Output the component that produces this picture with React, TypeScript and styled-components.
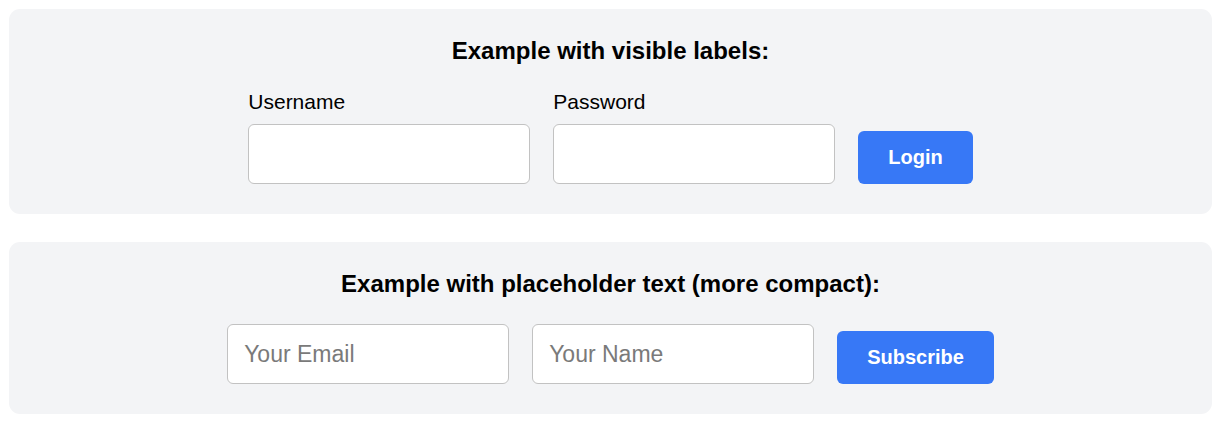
import React from 'react';
import styled, { createGlobalStyle } from 'styled-components';

const GlobalStyle = createGlobalStyle`
  * {
    box-sizing: border-box;
  }
  body {
    margin: 0;
    background: #ffffff;
    font-family: 'Liberation Sans', Arial, Helvetica, sans-serif;
    color: #000000;
  }
`;

const App = () => {
  return (
    <>
      <GlobalStyle />
      <Page>
        <Panel>
          <Title>Example with visible labels:</Title>
          <Form onSubmit={(e) => e.preventDefault()}>
            <Field>
              <Label htmlFor="username">Username</Label>
              <Input id="username" type="text" />
            </Field>
            <Field>
              <Label htmlFor="password">Password</Label>
              <Input id="password" type="password" />
            </Field>
            <Button type="submit">Login</Button>
          </Form>
        </Panel>
        <Panel>
          <Title $compact>Example with placeholder text (more compact):</Title>
          <Form onSubmit={(e) => e.preventDefault()}>
            <Input type="email" placeholder="Your Email" aria-label="Your Email" />
            <Input type="text" placeholder="Your Name" aria-label="Your Name" />
            <Button type="submit">Subscribe</Button>
          </Form>
        </Panel>
      </Page>
    </>
  );
};

export default App;

const Page = styled.div`
  display: flex;
  flex-direction: column;
  gap: 28px;
  padding: 9px;
`;

const Panel = styled.section`
  background: #f3f4f6;
  border-radius: 11px;
  padding: 28px 20px 30px;
  display: flex;
  flex-direction: column;
  align-items: center;
`;

const Title = styled.h3<{ $compact?: boolean }>`
  margin: 0 0 ${({ $compact }) => ($compact ? '26px' : '25px')};
  font-size: 24px;
  font-weight: 700;
  text-align: center;
`;

const Form = styled.form`
  display: flex;
  align-items: flex-end;
  justify-content: center;
  gap: 23px;
`;

const Field = styled.div`
  display: flex;
  flex-direction: column;
  gap: 10px;
`;

const Label = styled.label`
  font-size: 21px;
  color: #000000;
`;

const Input = styled.input`
  width: 282px;
  height: 60px;
  padding: 0 16px;
  border: 1px solid #c2c2c2;
  border-radius: 6px;
  background: #ffffff;
  font-family: 'Liberation Sans', Arial, Helvetica, sans-serif;
  font-size: 23px;
  color: #000000;
  outline: none;

  &::placeholder {
    color: #7a7a7a;
  }
`;

const Button = styled.button`
  height: 53px;
  padding: 0 30px;
  border: none;
  border-radius: 6px;
  background: #3778f6;
  color: #ffffff;
  font-family: 'Liberation Sans', Arial, Helvetica, sans-serif;
  font-size: 20px;
  font-weight: 700;
  cursor: pointer;
`;
